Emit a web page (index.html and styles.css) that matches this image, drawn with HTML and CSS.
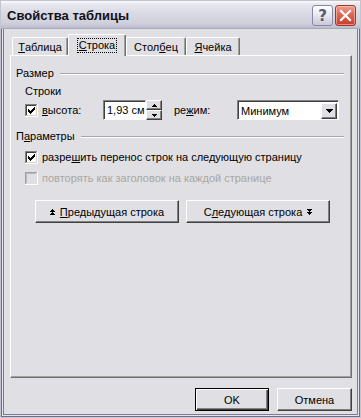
FILE: index.html
```html
<!DOCTYPE html>
<html>
<head>
<meta charset="utf-8">
<link rel="stylesheet" href="styles.css">
</head>
<body>
<div class="window">
  <div class="titlebar">
    <span class="title">Свойства таблицы</span>
    <div class="tbtns">
      <span class="tbtn help">?</span>
      <span class="tbtn close"><svg width="21" height="21" viewBox="0 0 21 21"><path d="M6 6 L15 15 M15 6 L6 15" stroke="#fff" stroke-width="2.2" stroke-linecap="square"/></svg></span>
    </div>
  </div>
  <div class="client">
    <div class="tabs">
      <div class="tab w1"><u>Т</u>аблица</div>
      <div class="tab sel"><span class="focus"><u>С</u>трока</span></div>
      <div class="tab w3">Стол<u>б</u>ец</div>
      <div class="tab w4"><u>Я</u>чейка</div>
    </div>
    <div class="panel">
      <div class="group g1"><span>Размер</span><span class="rule"></span></div>
      <div class="sub">Строки</div>
      <div class="hrow">
        <div class="chk hchk">
          <svg class="box" width="13" height="13" viewBox="0 0 13 13" shape-rendering="crispEdges">
            <rect x="0" y="0" width="13" height="13" fill="#fff"/>
            <rect x="0" y="0" width="12" height="1" fill="#808080"/><rect x="0" y="0" width="1" height="12" fill="#808080"/>
            <rect x="1" y="1" width="10" height="1" fill="#404040"/><rect x="1" y="1" width="1" height="10" fill="#404040"/>
            <rect x="1" y="11" width="11" height="1" fill="#d4d0c8"/><rect x="11" y="1" width="1" height="11" fill="#d4d0c8"/>
            <g fill="#000"><rect x="3" y="5" width="1" height="3"/><rect x="4" y="6" width="1" height="3"/><rect x="5" y="7" width="1" height="3"/><rect x="6" y="6" width="1" height="3"/><rect x="7" y="5" width="1" height="3"/><rect x="8" y="4" width="1" height="3"/><rect x="9" y="3" width="1" height="3"/></g>
          </svg>
          <span><u>в</u>ысота:</span>
        </div>
        <div class="spin">
          <span class="field">1,93 см</span>
          <span class="arrows">
            <span class="abtn"><svg width="5" height="3" viewBox="0 0 5 3" shape-rendering="crispEdges"><path d="M2 0h1v1h1v1h1v1H0V2h1V1h1z" fill="#000"/></svg></span>
            <span class="abtn"><svg width="5" height="3" viewBox="0 0 5 3" shape-rendering="crispEdges"><path d="M0 0h5v1H4v1H3v1H2V2H1V1H0z" fill="#000"/></svg></span>
          </span>
        </div>
        <span class="lbl">ре<u>ж</u>им:</span>
        <div class="select">
          <span class="sval">Минимум</span>
          <span class="drop"><svg width="7" height="4" viewBox="0 0 7 4" shape-rendering="crispEdges"><path d="M0 0h7v1H6v1H5v1H4v1H3V3H2V2H1V1H0z" fill="#000"/></svg></span>
        </div>
      </div>
      <div class="group g2"><span>П<u>а</u>раметры</span><span class="rule"></span></div>
      <div class="chk opt o1">
        <svg class="box" width="13" height="13" viewBox="0 0 13 13" shape-rendering="crispEdges">
          <rect x="0" y="0" width="13" height="13" fill="#fff"/>
          <rect x="0" y="0" width="12" height="1" fill="#808080"/><rect x="0" y="0" width="1" height="12" fill="#808080"/>
          <rect x="1" y="1" width="10" height="1" fill="#404040"/><rect x="1" y="1" width="1" height="10" fill="#404040"/>
          <rect x="1" y="11" width="11" height="1" fill="#d4d0c8"/><rect x="11" y="1" width="1" height="11" fill="#d4d0c8"/>
          <g fill="#000"><rect x="3" y="5" width="1" height="3"/><rect x="4" y="6" width="1" height="3"/><rect x="5" y="7" width="1" height="3"/><rect x="6" y="6" width="1" height="3"/><rect x="7" y="5" width="1" height="3"/><rect x="8" y="4" width="1" height="3"/><rect x="9" y="3" width="1" height="3"/></g>
        </svg>
        <span>разре<u>ш</u>ить перенос строк на следующую страницу</span>
      </div>
      <div class="chk opt o2 dis">
        <svg class="box" width="13" height="13" viewBox="0 0 13 13" shape-rendering="crispEdges">
          <rect x="0" y="0" width="13" height="13" fill="#e0dfe3"/>
          <rect x="0" y="0" width="12" height="1" fill="#a0a0a8"/><rect x="0" y="0" width="1" height="12" fill="#a0a0a8"/>
          <rect x="1" y="1" width="10" height="1" fill="#b8b8c0"/><rect x="1" y="1" width="1" height="10" fill="#b8b8c0"/>
          <rect x="0" y="12" width="13" height="1" fill="#fff"/><rect x="12" y="0" width="1" height="13" fill="#fff"/>
        </svg>
        <span>повторять как заголовок на каждой странице</span>
      </div>
      <div class="navbtns">
        <div class="btn nav"><svg width="5" height="6" viewBox="0 0 5 6" shape-rendering="crispEdges"><path d="M2 0h1v1h1v1h1v1H0V2h1V1h1zM2 3h1v1h1v1h1v1H0V5h1V4h1z" fill="#000"/></svg><span><u>П</u>редыдущая строка</span></div>
        <div class="btn nav"><span>С<u>л</u>едующая строка</span><svg width="5" height="6" viewBox="0 0 5 6" shape-rendering="crispEdges"><path d="M0 0h5v1H4v1H3v1H2V2H1V1H0zM0 3h5v1H4v1H3v1H2V5H1V4H0z" fill="#000"/></svg></div>
      </div>
    </div>
    <div class="footer">
      <div class="btn def ok">OK</div>
      <div class="btn cancel">Отмена</div>
    </div>
  </div>
</div>
</body>
</html>
```

FILE: styles.css
```css
html, body {
  margin: 0;
  padding: 0;
  background: #e0dfe3;
}
body {
  font-family: "Liberation Sans", Tahoma, Arial, sans-serif;
  font-size: 11px;
  color: #000;
}
u { text-decoration: underline; text-underline-offset: 1px; }

.window {
  width: 361px;
  height: 418px;
  box-sizing: border-box;
  border: 1px solid #c4c4d0;
  box-shadow: inset 0 0 0 1px #6e6e8c, inset 0 0 0 2px #e4e4ec, inset 0 0 0 3px #7c7c98;
  background: #e0dfe3;
  display: flex;
  flex-direction: column;
}

.titlebar {
  height: 27px;
  flex: none;
  display: flex;
  align-items: center;
  justify-content: space-between;
  padding: 0 4px 0 6px;
  background: linear-gradient(#fbfbfd 0, #e8e8f0 3px, #dadae4 12px, #d0d0dc 22px, #bcbccc 27px);
  border-bottom: 1px solid #a8a8bc;
}
.title {
  font-weight: bold;
  font-size: 13px;
  color: #101018;
  padding-top: 2px;
}
.tbtns {
  display: flex;
  gap: 2px;
  padding-top: 2px;
}
.tbtn {
  width: 21px;
  height: 21px;
  box-sizing: border-box;
  border-radius: 3px;
  display: flex;
  align-items: center;
  justify-content: center;
}
.help {
  border: 1px solid #8888a4;
  background: linear-gradient(#ffffff, #e6e6ee 50%, #c8c8d8);
  color: #585870;
  font-weight: bold;
  font-size: 15px;
  font-family: "DejaVu Sans", sans-serif;
}
.close {
  border: 1px solid #a03828;
  background: linear-gradient(#f0a090, #e06a58 40%, #c83c2c);
  box-shadow: inset 0 0 0 1px rgba(255,220,210,0.5);
}
.close svg { display: block; margin: -1px; }

.client {
  flex: 1;
  display: flex;
  flex-direction: column;
  padding: 5px 8px 0 9px;
}

.tabs {
  display: flex;
  align-items: flex-end;
  height: 21px;
  padding-left: 2px;
  position: relative;
  z-index: 1;
}
.tab {
  height: 18px;
  box-sizing: border-box;
  display: flex;
  align-items: center;
  justify-content: center;
  border-top: 1px solid #fff;
  border-left: 1px solid #fff;
  border-right: 1px solid #6f6f6f;
  border-radius: 2px 2px 0 0;
  box-shadow: inset -1px 0 #a0a0a0;
  background: #e0dfe3;
  padding-top: 1px;
}
.w1 { width: 56px; }
.w3 { width: 60px; }
.w4 { width: 54px; }
.tab.sel {
  width: 58px;
  height: 22px;
  margin-bottom: -1px;
  padding-top: 0;
  padding-bottom: 1px;
}
.focus {
  outline: 1px dotted #000;
  outline-offset: 0;
  padding: 0 1px;
  line-height: 13px;
}

.panel {
  height: 323px;
  box-sizing: border-box;
  border-top: 1px solid #fff;
  border-left: 1px solid #fff;
  border-right: 1px solid #6f6f6f;
  border-bottom: 1px solid #6f6f6f;
  box-shadow: inset -1px -1px #a0a0a0;
  padding: 0 7px 0 5px;
  display: flex;
  flex-direction: column;
}

.group {
  display: flex;
  align-items: center;
  height: 13px;
  line-height: 13px;
}
.g1 { margin-top: 11px; }
.g2 { margin-top: 10px; }
.rule {
  flex: 1;
  height: 0;
  border-top: 1px solid #a6a5aa;
  border-bottom: 1px solid #fff;
  margin-left: 6px;
}
.g2 .rule { margin-left: 6px; }

.sub {
  margin-top: 5px;
  margin-left: 9px;
  height: 13px;
  line-height: 13px;
}

.hrow {
  margin-top: 2px;
  margin-left: 9px;
  height: 20px;
  display: flex;
  align-items: center;
}
.chk {
  display: flex;
  align-items: center;
  gap: 4px;
}
.chk .box { flex: none; display: block; }
.hchk { width: 78px; }

.spin {
  display: flex;
  height: 20px;
}
.field {
  width: 43px;
  height: 20px;
  box-sizing: border-box;
  background: #fff;
  border: 1px solid;
  border-color: #808080 #fff #fff #808080;
  box-shadow: inset 1px 1px #404040;
  display: flex;
  align-items: center;
  padding-left: 3px;
}
.arrows {
  width: 16px;
  display: flex;
  flex-direction: column;
}
.abtn {
  height: 10px;
  box-sizing: border-box;
  background: #e0dfe3;
  border: 1px solid;
  border-color: #fff #404040 #404040 #fff;
  box-shadow: inset -1px -1px #808080;
  display: flex;
  align-items: center;
  justify-content: center;
}
.abtn svg { display: block; }

.lbl {
  margin-left: 12px;
  width: 63px;
}
.select {
  width: 102px;
  height: 20px;
  box-sizing: border-box;
  background: #fff;
  border: 1px solid;
  border-color: #808080 #fff #fff #808080;
  box-shadow: inset 1px 1px #404040;
  display: flex;
  align-items: center;
  justify-content: space-between;
  padding: 2px 1px 1px 2px;
}
.sval { padding-left: 1px; }
.drop {
  width: 16px;
  height: 16px;
  box-sizing: border-box;
  background: #e0dfe3;
  border: 1px solid;
  border-color: #fff #404040 #404040 #fff;
  box-shadow: inset -1px -1px #808080;
  display: flex;
  align-items: center;
  justify-content: center;
}
.drop svg { display: block; }

.opt {
  margin-left: 9px;
  height: 16px;
}
.o1 { margin-top: 6px; }
.o2 { margin-top: 5px; }
.dis { color: #a8a7a0; }

.navbtns {
  margin-top: 14px;
  margin-left: 19px;
  display: flex;
  gap: 7px;
}
.btn {
  height: 23px;
  box-sizing: border-box;
  background: #e0dfe3;
  border: 1px solid;
  border-color: #fff #404040 #404040 #fff;
  box-shadow: inset -1px -1px #808080;
  display: flex;
  align-items: center;
  justify-content: center;
}
.nav {
  width: 144px;
  gap: 5px;
}
.nav svg { display: block; }

.footer {
  display: flex;
  justify-content: flex-end;
  gap: 8px;
  margin-top: 10px;
  padding-right: 0;
}
.ok { width: 74px; }
.cancel { width: 75px; }
.def {
  border: 1px solid #000;
  box-shadow: inset 1px 1px #fff, inset -1px -1px #404040, inset -2px -2px #808080;
}
```
